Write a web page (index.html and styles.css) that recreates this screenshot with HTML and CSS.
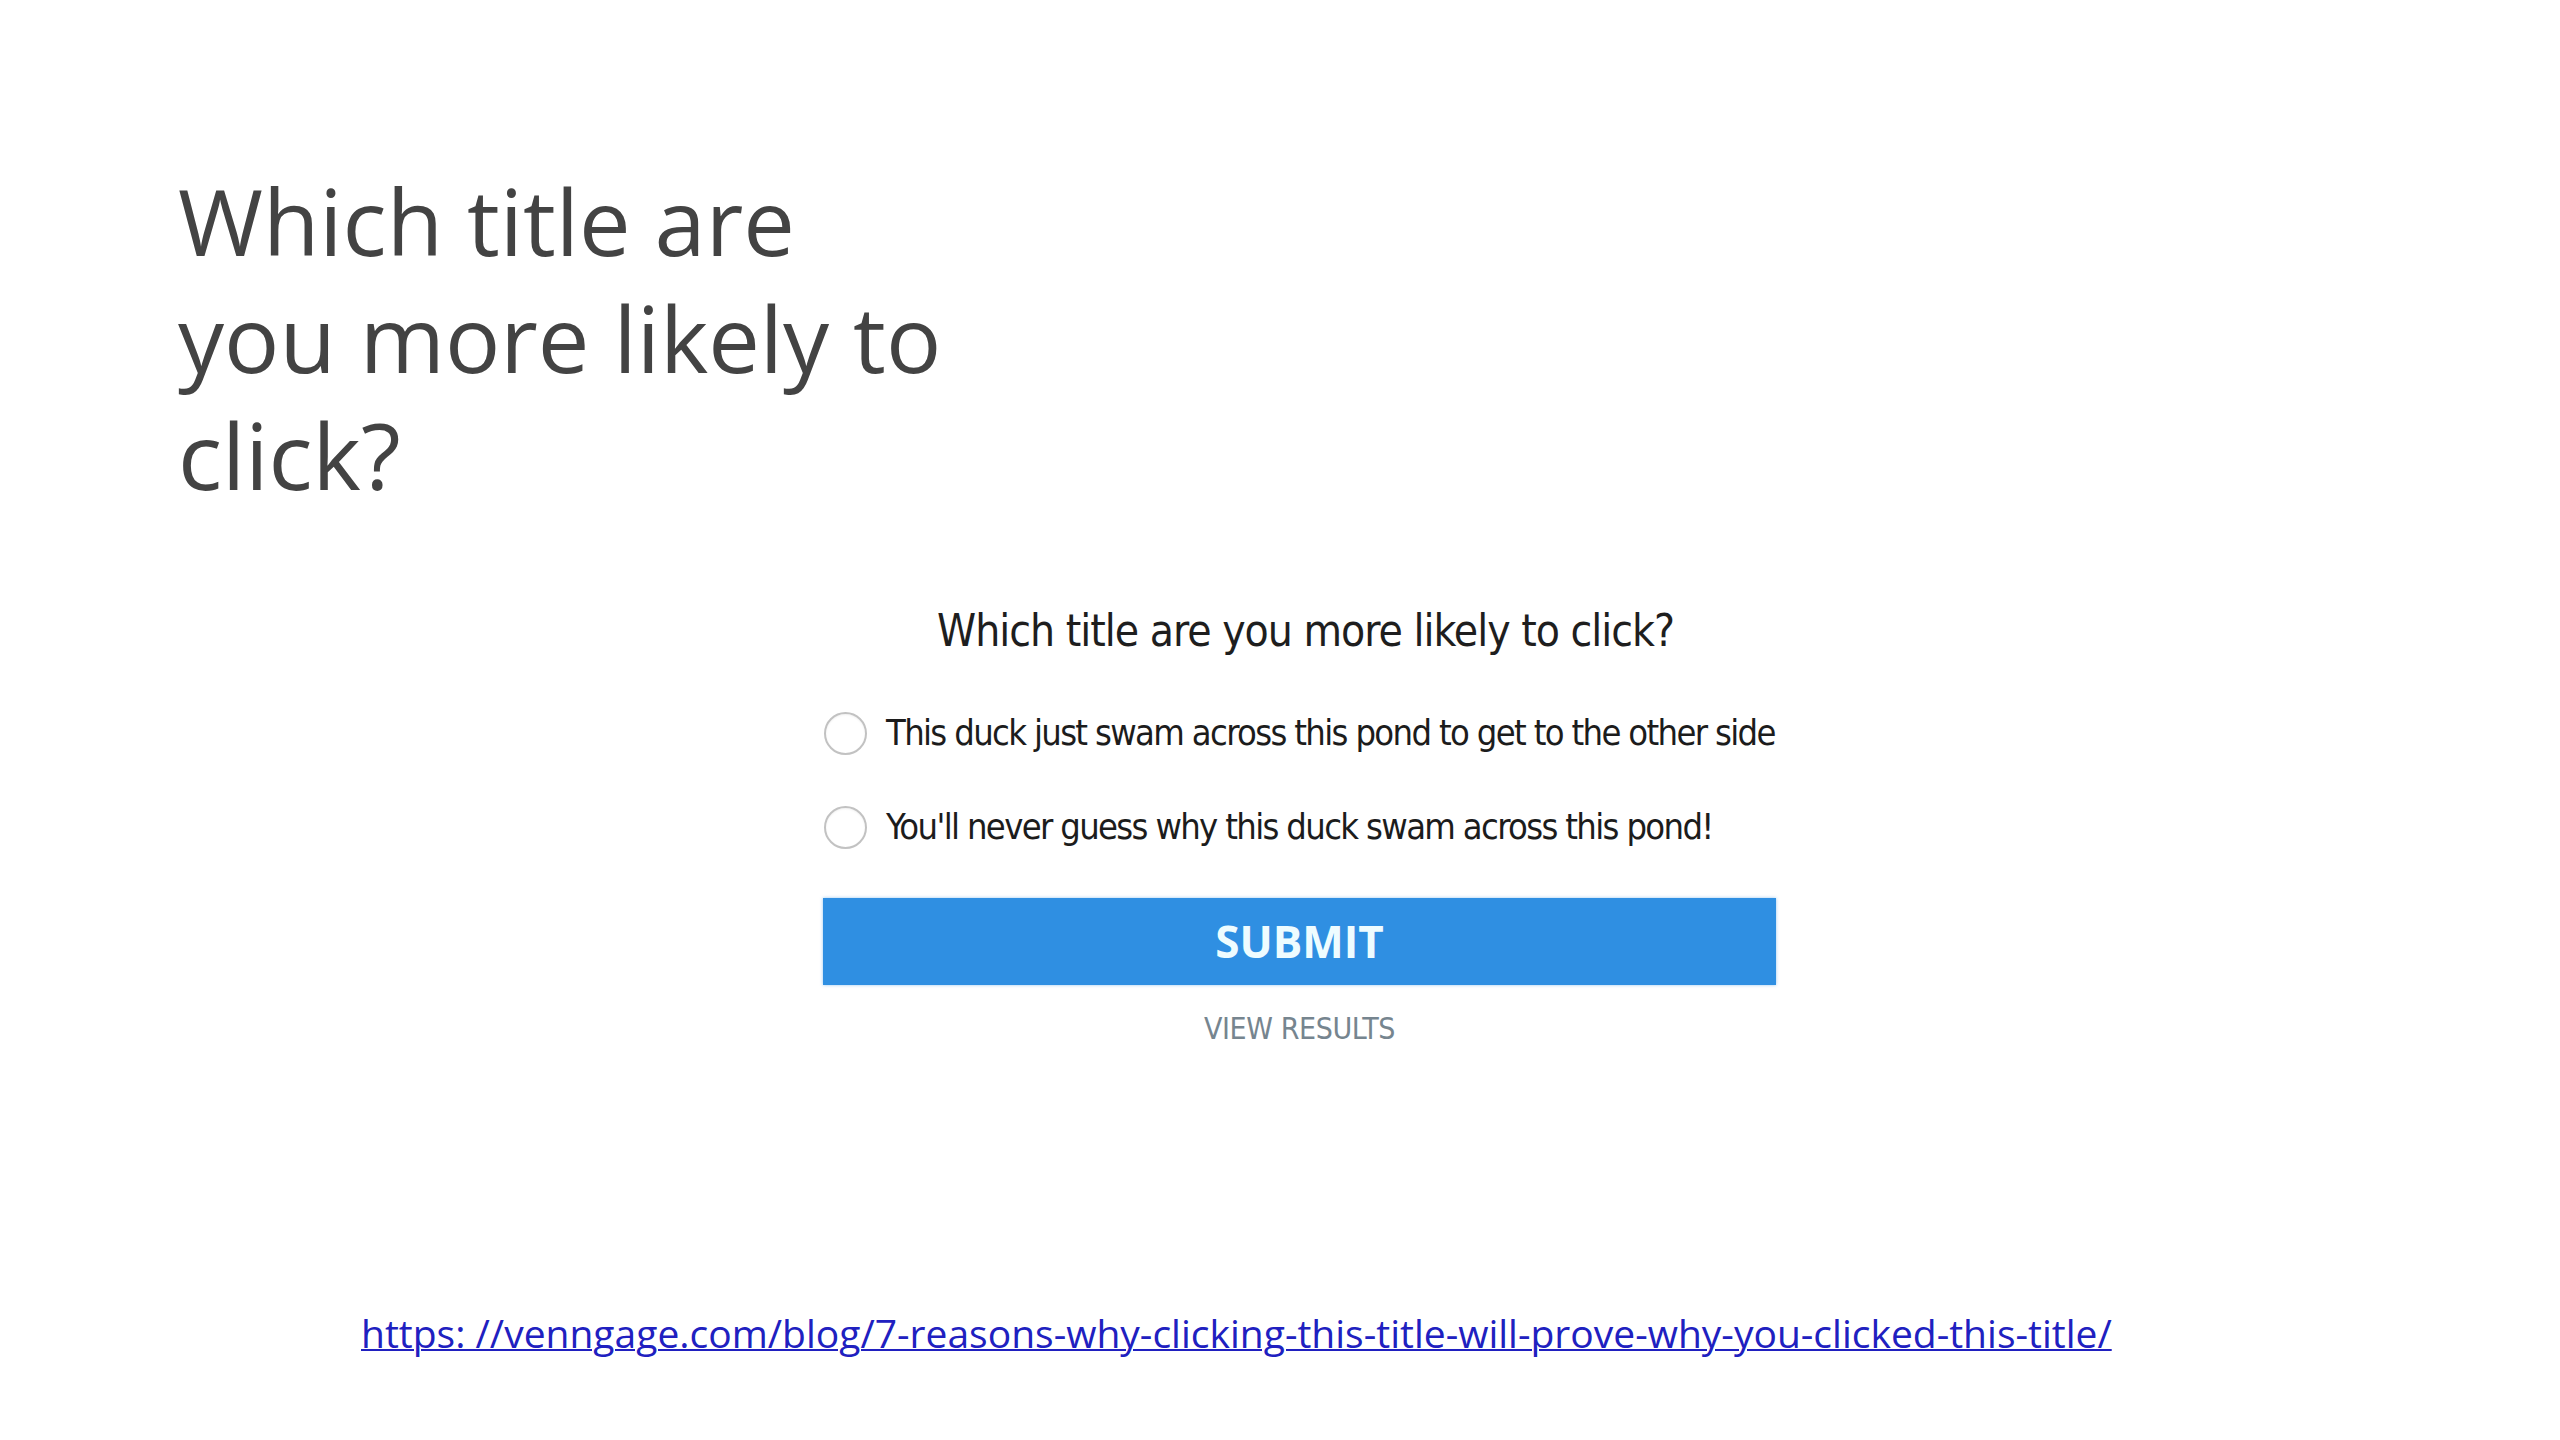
FILE: index.html
```html
<!DOCTYPE html>
<html lang="en">
<head>
<meta charset="utf-8">
<title>Which title are you more likely to click?</title>
<link rel="stylesheet" href="styles.css">
</head>
<body>
<main class="slide">
  <h1 class="title">Which title are<br>you more likely to<br>click?</h1>
  <section class="poll">
    <h2 class="question">Which title are you more likely to click?</h2>
    <label class="option"><span class="radio"></span><span class="option-text">This duck just swam across this pond to get to the other side</span></label>
    <label class="option"><span class="radio"></span><span class="option-text">You'll never guess why this duck swam across this pond!</span></label>
    <div class="submit">SUBMIT</div>
    <div class="view">VIEW RESULTS</div>
  </section>
  <a class="source" href="https://venngage.com/blog/7-reasons-why-clicking-this-title-will-prove-why-you-clicked-this-title/">https: //venngage.com/blog/7-reasons-why-clicking-this-title-will-prove-why-you-clicked-this-title/</a>
</main>
</body>
</html>
```
FILE: styles.css
```css
html, body {
  margin: 0;
  padding: 0;
  background: #ffffff;
}
.slide {
  width: 2560px;
  height: 1440px;
  display: flex;
  flex-direction: column;
  align-items: flex-start;
}
.title {
  margin: 0;
  padding: 162px 0 0 178px;
  font-family: "Open Sans", "Noto Sans", sans-serif;
  font-weight: 400;
  font-size: 92px;
  line-height: 117px;
  color: #434343;
}
.poll {
  margin: 88px 0 0 823px;
  width: 953px;
  display: flex;
  flex-direction: column;
  font-family: "DejaVu Sans Condensed", "DejaVu Sans", sans-serif;
  font-stretch: condensed;
}
.question {
  margin: 0;
  height: 60px;
  font-size: 44px;
  font-weight: 400;
  line-height: 60px;
  letter-spacing: -1px;
  text-align: center;
  color: #1e1e1e;
  padding-left: 12px;
  white-space: nowrap;
}
.option {
  margin: 0;
  height: 94px;
  display: flex;
  align-items: center;
  gap: 19px;
}
.option:first-of-type {
  margin-top: 25px;
}
.radio {
  box-sizing: border-box;
  width: 43px;
  height: 43px;
  margin-left: 1px;
  border-radius: 50%;
  border: 2px solid #c2c2c2;
  box-shadow: inset 0 1px 2px rgba(0,0,0,0.06);
  flex: none;
}
.option-text {
  font-size: 36px;
  line-height: 50px;
  letter-spacing: -1.65px;
  color: #1c1c1c;
  white-space: nowrap;
}
.submit {
  margin-top: 24px;
  height: 87px;
  background: #2f8fe2;
  color: #eefcff;
  font-family: "Open Sans", "Noto Sans", sans-serif;
  font-stretch: normal;
  font-weight: 700;
  font-size: 44px;
  line-height: 87px;
  text-align: center;
  box-shadow: 0 0 3px rgba(47,143,226,0.5);
}
.view {
  margin-top: 24px;
  height: 40px;
  line-height: 40px;
  font-size: 30px;
  letter-spacing: -0.4px;
  text-align: center;
  color: #76858f;
}
.source {
  margin: 259px 0 0 361px;
  font-family: "Open Sans", "Noto Sans", sans-serif;
  font-size: 39px;
  line-height: 50px;
  color: #2020c0;
  text-decoration: underline;
  text-decoration-thickness: 2px;
}
```
